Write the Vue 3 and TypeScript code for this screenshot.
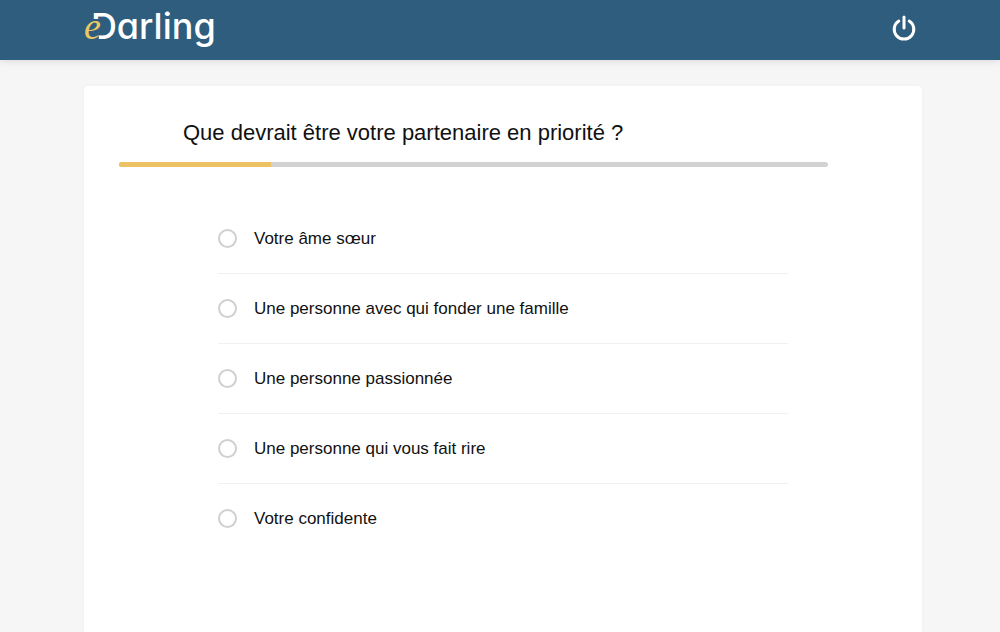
<script setup lang="ts">
import { ref } from 'vue'

const question = 'Que devrait être votre partenaire en priorité ?'
const options: string[] = [
  'Votre âme sœur',
  'Une personne avec qui fonder une famille',
  'Une personne passionnée',
  'Une personne qui vous fait rire',
  'Votre confidente',
]
const selected = ref<string>('')
const progress = 21.5
</script>

<template>
  <div class="page">
    <header class="header">
      <div class="bar">
        <a class="logo" href="#" aria-label="eDarling"><span class="logo-e">e</span><span class="logo-name"><span class="logo-initial">D</span>arling</span></a>
        <button class="power" type="button" aria-label="Déconnexion">
          <svg viewBox="0 0 24 26" width="24" height="26" fill="none" stroke="currentColor" stroke-width="3" stroke-linecap="round">
            <path d="M6.8 6A9.8 9.8 0 1 0 17.2 6" />
            <path d="M12 2V13" />
          </svg>
        </button>
      </div>
    </header>
    <main class="card">
      <h1 id="question" class="question">{{ question }}</h1>
      <div class="track" role="progressbar" aria-label="Progression" :aria-valuenow="progress">
        <div class="fill" :style="{ width: progress + '%' }"></div>
      </div>
      <form class="options" role="radiogroup" aria-labelledby="question">
        <label v-for="option in options" :key="option" class="option">
          <input v-model="selected" class="radio" type="radio" name="priority" :value="option" />
          <span>{{ option }}</span>
        </label>
      </form>
    </main>
  </div>
</template>

<style>
body {
  margin: 0;
  background: #f6f6f6;
}
</style>

<style scoped>
.page {
  display: flex;
  flex-direction: column;
  min-height: 100vh;
  color: #111;
  font-family: "Liberation Sans", Arial, sans-serif;
  background: #f6f6f6;
}

.header {
  background: #2e5d7e;
  box-shadow: 0 1px 8px rgba(0, 0, 0, 0.12);
}

.bar {
  display: flex;
  align-items: center;
  justify-content: space-between;
  box-sizing: border-box;
  height: 60px;
  margin: 0 78px 0 84px;
  padding: 0 6px 4px 0;
}

.logo {
  display: flex;
  align-items: baseline;
  padding-bottom: 4px;
  color: #fff;
  text-decoration: none;
}

.logo-e {
  margin-right: -10px;
  color: #ecc863;
  font: italic 38px/48px "Liberation Serif", serif;
}

.logo-name {
  font: 500 36px/48px Inter, sans-serif;
  font-feature-settings: "cv11";
}

/* The initial's stem stops above the script "e". */
.logo-initial {
  display: inline-block;
  clip-path: polygon(0 0, 100% 0, 100% 100%, 8px 100%, 8px 17px, 0 17px);
}

.power {
  display: flex;
  padding: 0;
  border: 0;
  color: #fff;
  background: none;
  cursor: pointer;
}

.card {
  flex: 1;
  margin: 26px 78px 0 84px;
  padding: 32px 94px 48px 35px;
  border-radius: 4px 4px 0 0;
  background: #fff;
  box-shadow: 0 0 4px rgba(0, 0, 0, 0.03);
}

.question {
  margin: 0 0 14px 64px;
  font-size: 22px;
  font-weight: 400;
  line-height: 30px;
}

.track {
  height: 5px;
  border-radius: 3px;
  overflow: hidden;
  background: #d2d2d2;
}

.fill {
  height: 100%;
  background: #edc262;
}

.options {
  margin: 37px 40px 0 99px;
}

.option {
  display: flex;
  align-items: center;
  gap: 17px;
  height: 69px;
  font-size: 17px;
  line-height: 24px;
  cursor: pointer;
}

.option + .option {
  border-top: 1px solid #f0f0f0;
}

.radio {
  flex: none;
  box-sizing: border-box;
  width: 19px;
  height: 19px;
  margin: 0;
  border: 2px solid #d0d0d0;
  border-radius: 50%;
  background: #fff;
  appearance: none;
  cursor: pointer;
}

.radio:checked {
  border: 6px solid #edc262;
}
</style>
